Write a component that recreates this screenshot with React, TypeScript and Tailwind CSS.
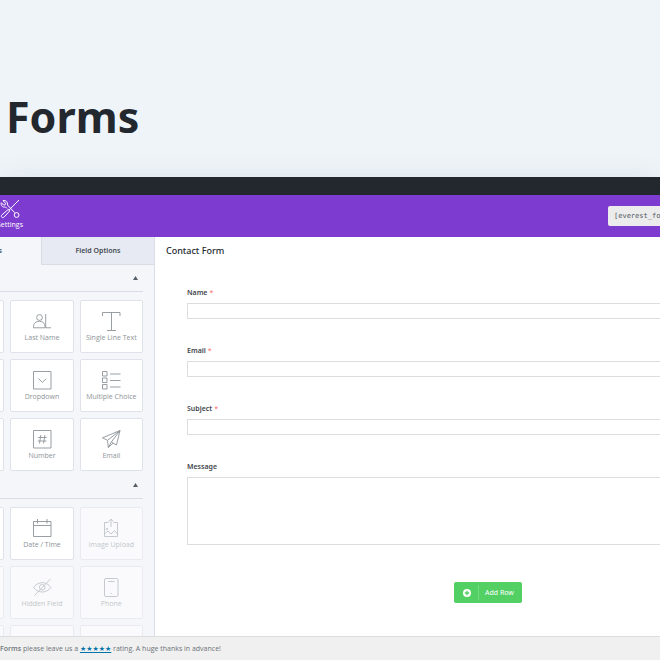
import type { ReactNode } from "react";

const icons: Record<string, ReactNode> = {
  lastName: (
    <>
      <circle cx="7.5" cy="6.5" r="2.9" />
      <path d="M1.500 16.800v-1.200c0-3.300 2.500-5.300 6-5.300s5.500 2 5.500 5.300v1.200zM13.700 3v13.800H19" />
    </>
  ),
  text: <path d="M1.500 5V1.500h17.500V5M10.500 1.500v17.500M6 19.500h9" />,
  dropdown: (
    <>
      <path d="M1.500 1.500h17.500v17.500H1.500z" />
      <path d="M6.500 8.500l3.900 3.900 3.900-3.900" />
    </>
  ),
  choice: (
    <path d="M1.500 1.500h4.500v4.500H1.500zM1.500 8h4.500v4.500H1.500zM1.500 14.500h4.500v4.500H1.500zM9 4h10.500M9 10.500h10.500M9 17h10.500" />
  ),
  number: (
    <>
      <path d="M1.500 1.500h17.500v17.500H1.500z" />
      <path d="M8.800 6l-1.300 8.500M12.900 6l-1.300 8.500M6.200 8.500h8.600M5.800 12h8.600" />
    </>
  ),
  email: <path d="M19 1.500L1.500 8.800l5 2.500L19 1.500l-3.500 14.500-5.200-2.900L19 1.500M6.500 11.300l.8 7.200 3-5.400M7.300 18.500l4.800-4.400" />,
  date: <path d="M1.500 3.500h17.500v15H1.500zM1.500 7.500h17.500M5.500 1v4.500M15 1v4.500" />,
  image: (
    <>
      <path d="M7.500 4.500H3.500v14h13v-14h-4M10 9V1.200M7.500 3.500L10 1.200l2.500 2.300" />
      <path d="M3.500 16l3.500-3 3 3 3.500-3.500 3 3.500" />
      <circle cx="6" cy="11" r=".8" />
    </>
  ),
  hidden: (
    <>
      <path d="M1.500 10.500c4.800-6.500 12.700-6.500 17.500 0-4.800 6-12.700 6-17.500 0zM2.500 18.500L18.500 2" />
      <circle cx="10.200" cy="10.300" r="2.800" />
    </>
  ),
  phone: (
    <>
      <rect x="3.500" y="1.500" width="13.500" height="18" rx="1.500" />
      <path d="M7 4.500h6.500M9.600 16.500h1.300" />
    </>
  ),
};

type Field = { label: string; icon?: string; locked?: boolean };

const general: Field[] = [
  { label: "" },
  { label: "Last Name", icon: "lastName" },
  { label: "Single Line Text", icon: "text" },
  { label: "" },
  { label: "Dropdown", icon: "dropdown" },
  { label: "Multiple Choice", icon: "choice" },
  { label: "" },
  { label: "Number", icon: "number" },
  { label: "Email", icon: "email" },
];

const advanced: Field[] = [
  { label: "" },
  { label: "Date / Time", icon: "date" },
  { label: "Image Upload", icon: "image", locked: true },
  { label: "", locked: true },
  { label: "Hidden Field", icon: "hidden", locked: true },
  { label: "Phone", icon: "phone", locked: true },
  { label: "", locked: true },
  { label: "", locked: true },
  { label: "", locked: true },
];

function FieldCard({ label, icon, locked }: Field) {
  const className =
    "flex h-[53px] flex-col items-center rounded-xs border border-[#dfe2ea] bg-white pt-[10px] font-['Open_Sans','Noto_Sans',sans-serif] text-[7px] leading-[14px] whitespace-nowrap text-[#8d9498]";
  if (!icon) return <div className={locked ? `${className} opacity-50` : className} />;
  return (
    <button type="button" className={locked ? `${className} opacity-50` : className}>
      <svg className="h-5 w-5" viewBox="0 0 20 20" fill="none" stroke="currentColor" strokeWidth="0.9" aria-hidden="true">
        {icons[icon]}
      </svg>
      {label}
    </button>
  );
}

function FieldGroup({ fields }: { fields: Field[] }) {
  return (
    <section>
      <button
        type="button"
        aria-label="Toggle group"
        className="flex h-7 w-full items-center justify-end border-b border-[#d9dce6] pr-[5px]"
      >
        <svg className="h-1 w-[5px]" viewBox="0 0 5 4" fill="#555d66" aria-hidden="true">
          <path d="M2.500 0L5 4H0z" />
        </svg>
      </button>
      <div className="grid grid-cols-3 gap-[6px] pt-2">
        {fields.map((f, i) => (
          <FieldCard key={i} {...f} />
        ))}
      </div>
    </section>
  );
}

function FormRow({ id, label, required, multiline }: { id: string; label: string; required?: boolean; multiline?: boolean }) {
  return (
    <div>
      <label htmlFor={id} className="block text-[7px] leading-[10px] font-semibold text-[#3f464d]">
        {label}
        {required && <span className="ml-[2px] font-normal text-[#ff6b6b]">*</span>}
      </label>
      {multiline ? (
        <textarea id={id} className="mt-[5px] block h-[68px] w-full resize-none border border-[#dcdde0] bg-white" />
      ) : (
        <input id={id} type="text" className="mt-[5px] block h-4 w-full border border-[#dcdde0] bg-white px-1 text-[7px]" />
      )}
    </div>
  );
}

export default function App() {
  return (
    <div className="flex h-screen flex-col overflow-hidden bg-[#eff4f8] font-['Noto_Sans','Open_Sans',sans-serif]">
      <header className="h-[177px] shrink-0 px-[6px] pt-[87px]">
        <h1 className="text-[43px] leading-[60px] font-bold text-[#23282f]">Forms</h1>
      </header>

      <div className="flex min-h-0 flex-1 flex-col shadow-[0_0_24px_rgba(60,100,130,0.1)]">
        <div className="h-[18px] shrink-0 bg-[#23282f]" />
        <nav className="flex h-[42px] shrink-0 items-center justify-between bg-[#7e3bd0]">
          <button
            type="button"
            className="-ml-1 flex h-[34px] w-7 flex-col items-center font-['Open_Sans','Noto_Sans',sans-serif] text-[7px] leading-[12px] text-white"
          >
            <svg className="h-5 w-5" viewBox="0 0 20 20" fill="none" stroke="currentColor" strokeWidth="1" aria-hidden="true">
              <path d="M19 1L8.800 11.300M8.300 10.300l1.500 1.500-5.800 6.400c-1.500 1.400-3.600-.7-2.200-2.200zM3 1.700l2.500 2.500-.3 1.500-1.600.3L1.300 3.700c-.8 2.700 1.300 5 4.100 4.200l1.500 1.500M3 1.700c2.700-.9 5.200 1.400 4.400 4.200l7.300 7.800" />
              <circle cx="16.600" cy="16" r="2.400" />
            </svg>
            <span>Settings</span>
          </button>
          <input
            readOnly
            aria-label="Form shortcode"
            value={'[everest_form id="1"]'}
            className="-mr-[60px] h-5 w-28 rounded-xs bg-[#ececec] px-[6px] font-['DejaVu_Sans_Mono',monospace] text-[7px] text-[#50575e]"
          />
        </nav>

        <div className="flex min-h-0 flex-1">
          <aside className="-ml-[72px] flex w-[227px] shrink-0 flex-col overflow-hidden border-r border-[#dcdfe8] bg-[#f5f6fa]">
            <div className="flex h-7 shrink-0 text-[7px] font-semibold text-[#444b53]">
              <button type="button" className="w-1/2 pt-px">Add Fields</button>
              <button type="button" className="w-1/2 border-b border-l border-[#dadde6] bg-[#e7eaf2] pt-[2px]">Field Options</button>
            </div>
            <div className="-mt-px pr-[11px] pl-[13px]">
              <FieldGroup fields={general} />
              <FieldGroup fields={advanced} />
            </div>
          </aside>

          <main className="-mr-[161px] flex flex-1 flex-col overflow-hidden bg-white">
            <h2 className="px-[11px] pt-2 text-[9px] leading-[12px] font-medium text-[#23282f]">Contact Form</h2>
            <form className="flex flex-col gap-[27px] px-8 pt-[31px]">
              <FormRow id="name" label="Name" required />
              <FormRow id="email" label="Email" required />
              <FormRow id="subject" label="Subject" required />
              <FormRow id="message" label="Message" multiline />
            </form>
            <button
              type="button"
              className="mx-auto mt-[37px] flex h-[21px] w-[68px] items-center rounded-xs bg-[#52d064] text-[7px] text-white"
            >
              <svg className="ml-[9px] h-2 w-2" viewBox="0 0 8 8" aria-hidden="true">
                <circle cx="4" cy="4" r="4" fill="#fff" />
                <path d="M4 1.800v4.400M1.800 4h4.400" stroke="#52d064" strokeWidth="1.300" />
              </svg>
              <span className="ml-[7px] border-l border-[#74da83] pt-[3px] pb-px pl-[6px]">Add Row</span>
            </button>
          </main>
        </div>

        <footer className="h-6 shrink-0 border-t border-[#dcdde0] bg-[#f0f0f0] font-['Open_Sans','Noto_Sans',sans-serif] text-[7px] leading-[23px] whitespace-nowrap text-[#6c7278]">
          <strong className="font-semibold">Forms</strong> please leave us a{" "}
          <a href="#rate" className="font-['DejaVu_Sans',sans-serif] text-[#0073aa] underline">★★★★★</a> rating. A huge
          thanks in advance!
        </footer>
      </div>
    </div>
  );
}
